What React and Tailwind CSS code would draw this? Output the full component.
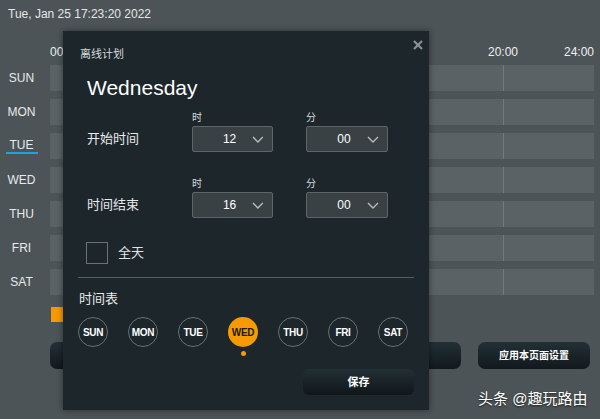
import React from 'react';

const days = ['SUN', 'MON', 'TUE', 'WED', 'THU', 'FRI', 'SAT'];

function Chevron() {
    return (
        <svg width="12" height="7" viewBox="0 0 12 7" className="ml-auto mr-[8px]">
            <polyline points="1,1 6,6 11,1" fill="none" stroke="#b7bbbd" strokeWidth="1.4" />
        </svg>
    );
}

function TimeSelect({ value, width }) {
    return (
        <div className={`flex items-center h-[26px] ${width} bg-[#3a4145] border border-[#5f6568] rounded-[2px] text-[12px] text-white`}>
            <span className="pl-[14px] w-[60px] text-center">{value}</span>
            <Chevron />
        </div>
    );
}

function TimeRow({ label, hour }) {
    return (
        <div className="flex items-end">
            <div className="w-[129px] pl-[24px] h-[26px] flex items-center text-[13px] text-[#e8eaeb]">{label}</div>
            <div className="flex flex-col w-[114px]">
                <span className="text-[10px] leading-[12px] mb-[2px] text-[#d9dcdd]">时</span>
                <TimeSelect value={hour} width="w-[81px]" />
            </div>
            <div className="flex flex-col">
                <span className="text-[10px] leading-[12px] mb-[2px] text-[#d9dcdd]">分</span>
                <TimeSelect value="00" width="w-[82px]" />
            </div>
        </div>
    );
}

export default function App() {
    return (
        <div className="w-[600px] h-[419px] relative overflow-hidden bg-[#4c5457] font-['Liberation_Sans','Noto_Sans_CJK_SC',sans-serif] select-none">
            {/* Background schedule page */}
            <div className="pl-[8px] pt-[7px] text-[12px] leading-[14px] text-[#e4e6e7]">Tue, Jan 25 17:23:20 2022</div>

            <div className="relative ml-[50px] mr-[6px] mt-[24px] h-[14px] text-[12px] leading-[14px] text-[#eef0f1]">
                <span className="absolute left-0">00:00</span>
                <span className="absolute left-[453px] -translate-x-1/2">20:00</span>
                <span className="absolute right-0">24:00</span>
            </div>

            <div className="flex flex-col gap-[8px] mt-[6px]">
                {days.map((d) => (
                    <div key={d} className="flex items-center">
                        <div className="w-[43px] mr-[7px] text-center text-[12px] leading-[14px] text-[#e8eaeb]">
                            {d === 'TUE' ? (
                                <span className="inline-block px-[4px] border-b-2 border-[#1ba3dc]">{d}</span>
                            ) : d}
                        </div>
                        <div className="flex-1 mr-[6px] h-[26px] bg-[#5a6265] grid grid-cols-6">
                            <div />
                            <div className="border-l border-[#737a7d]" />
                            <div className="border-l border-[#737a7d]" />
                            <div className="border-l border-[#737a7d]" />
                            <div className="border-l border-[#737a7d]" />
                            <div className="border-l border-[#737a7d]" />
                        </div>
                    </div>
                ))}
            </div>

            <div className="ml-[51px] mt-[12px] w-[12px] h-[15px] bg-[#f59a00]" />

            <div className="flex gap-[17px] ml-[50px] mr-[10px] mt-[20px]">
                <div className="flex-1 h-[27px] rounded-[7px] bg-gradient-to-b from-[#223036] to-[#12191c]" />
                <div className="w-[112px] h-[27px] rounded-[7px] bg-gradient-to-b from-[#223036] to-[#12191c] flex items-center justify-center text-[10px] font-bold text-white">
                    应用本页面设置
                </div>
            </div>

            <div className="absolute left-[478px] top-[389px] text-[15px] leading-[20px] text-white [text-shadow:0_1px_2px_rgba(0,0,0,0.7)]">
                头条 @趣玩路由
            </div>

            {/* Modal */}
            <div className="absolute left-[63px] top-[31px] w-[366px] h-[379px] bg-[#1c262b] shadow-[0_0_6px_rgba(0,0,0,0.45)] flex flex-col">
                <svg width="10" height="10" viewBox="0 0 10 10" className="absolute left-[350px] top-[9px]">
                    <line x1="1" y1="1" x2="9" y2="9" stroke="#8d9295" strokeWidth="2.2" />
                    <line x1="9" y1="1" x2="1" y2="9" stroke="#8d9295" strokeWidth="2.2" />
                </svg>

                <div className="pl-[17px] mt-[16px] text-[11px] leading-[14px] text-[#d6d9da]">离线计划</div>
                <div className="pl-[24px] mt-[15px] text-[21px] leading-[24px] text-white">Wednesday</div>

                <div className="mt-[12px]">
                    <TimeRow label="开始时间" hour="12" />
                </div>
                <div className="mt-[26px]">
                    <TimeRow label="时间结束" hour="16" />
                </div>

                <div className="flex items-center mt-[24px] pl-[23px]">
                    <div className="w-[22px] h-[22px] border border-[#6b7174]" />
                    <span className="ml-[10px] text-[13px] text-[#e2e4e5]">全天</span>
                </div>

                <div className="mx-[15px] mt-[13px] h-px bg-[#565d60]" />

                <div className="pl-[16px] mt-[13px] text-[13px] leading-[16px] text-[#e8eaeb]">时间表</div>

                <div className="flex gap-[20px] pl-[15px] mt-[10px]">
                    {days.map((d) => (
                        <div key={d} className="flex flex-col items-center">
                            <div
                                className={`w-[30px] h-[30px] rounded-full flex items-center justify-center text-[10px] font-bold tracking-[-0.3px] ${
                                    d === 'WED' ? 'bg-[#f59a00] text-[#1f1a10]' : 'border-[1.5px] border-[#6a7073] text-white'
                                }`}
                            >
                                {d}
                            </div>
                            <div className={`mt-[4px] w-[5px] h-[5px] rounded-full ${d === 'WED' ? 'bg-[#f59a00]' : ''}`} />
                        </div>
                    ))}
                </div>

                <div className="flex justify-end pr-[15px] mt-[13px]">
                    <div className="w-[111px] h-[26px] rounded-[6px] bg-gradient-to-b from-[#223036] to-[#10171a] flex items-center justify-center text-[11px] font-bold text-white">
                        保存
                    </div>
                </div>
            </div>
        </div>
    );
}
